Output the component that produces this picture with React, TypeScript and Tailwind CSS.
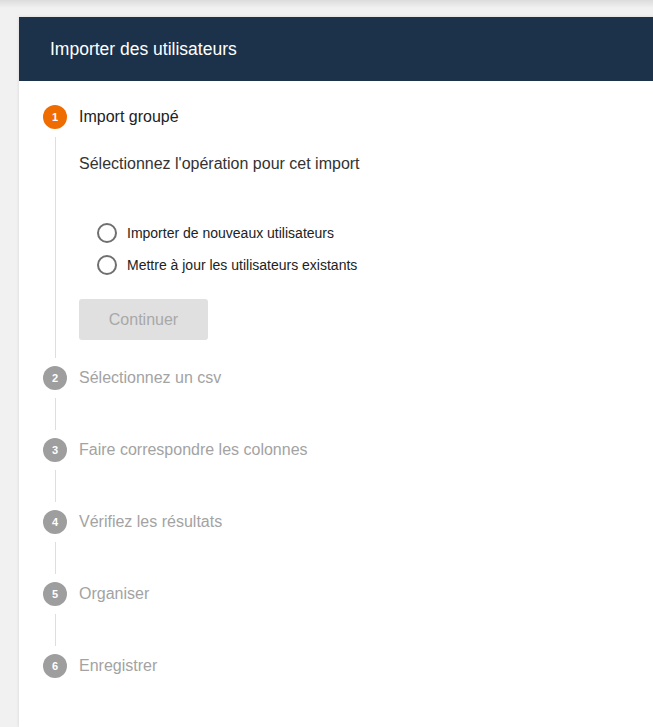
import React from "react";

const steps = [
  "Import groupé",
  "Sélectionnez un csv",
  "Faire correspondre les colonnes",
  "Vérifiez les résultats",
  "Organiser",
  "Enregistrer",
];

function Radio({ label }: { label: string }) {
  return (
    <label className="flex items-center h-8 cursor-pointer">
      <span className="w-5 h-5 rounded-full border-2 border-[#6f6f6f] bg-white" />
      <span className="ml-[10px] text-[14px] text-[#222]">{label}</span>
    </label>
  );
}

export default function App() {
  return (
    <div className="min-h-[727px] bg-[#f1f1f1] bg-gradient-to-b from-[#dcdcdc] to-[#f1f1f1] bg-[length:100%_8px] bg-no-repeat pt-[17px] pl-[19px] overflow-hidden font-['Liberation_Sans',Arial,sans-serif]">
      <div className="w-[700px] min-h-[710px] bg-white shadow-[0_0_3px_rgba(0,0,0,0.12)]">
        <div className="h-16 bg-[#1c324a] flex items-center pl-[31px]">
          <h1 className="text-white text-[17.5px]">Importer des utilisateurs</h1>
        </div>

        <div className="pt-6 pl-6">
          {steps.map((label, i) => {
            const active = i === 0;
            const last = i === steps.length - 1;
            return (
              <div key={label}>
                <div className="flex items-center h-6">
                  <span
                    className={
                      active
                        ? "w-6 h-6 rounded-full bg-[#ef6c00] text-white text-[11px] font-bold flex items-center justify-center"
                        : "w-6 h-6 rounded-full bg-[#9e9e9e] text-white text-[11px] font-bold flex items-center justify-center"
                    }
                  >
                    {i + 1}
                  </span>
                  <span className={active ? "ml-3 text-[16px] text-[#222]" : "ml-3 text-[16px] text-[#a3a3a3]"}>
                    {label}
                  </span>
                </div>

                {!last && (
                  <div className="my-2 ml-3 border-l border-[#dedede] pl-[23px]">
                    {active ? (
                      <div className="pt-[15px] pb-[18px]">
                        <p className="text-[16px] leading-6 text-[#333]">Sélectionnez l'opération pour cet import</p>
                        <div className="mt-[41px] pl-[18px]">
                          <Radio label="Importer de nouveaux utilisateurs" />
                          <Radio label="Mettre à jour les utilisateurs existants" />
                        </div>
                        <button
                          disabled
                          className="mt-[18px] w-[129px] h-[41px] rounded-[3px] bg-[#e0e0e0] text-[#a8a8a8] text-[16px]"
                        >
                          Continuer
                        </button>
                      </div>
                    ) : (
                      <div className="h-8" />
                    )}
                  </div>
                )}
              </div>
            );
          })}
        </div>
      </div>
    </div>
  );
}
